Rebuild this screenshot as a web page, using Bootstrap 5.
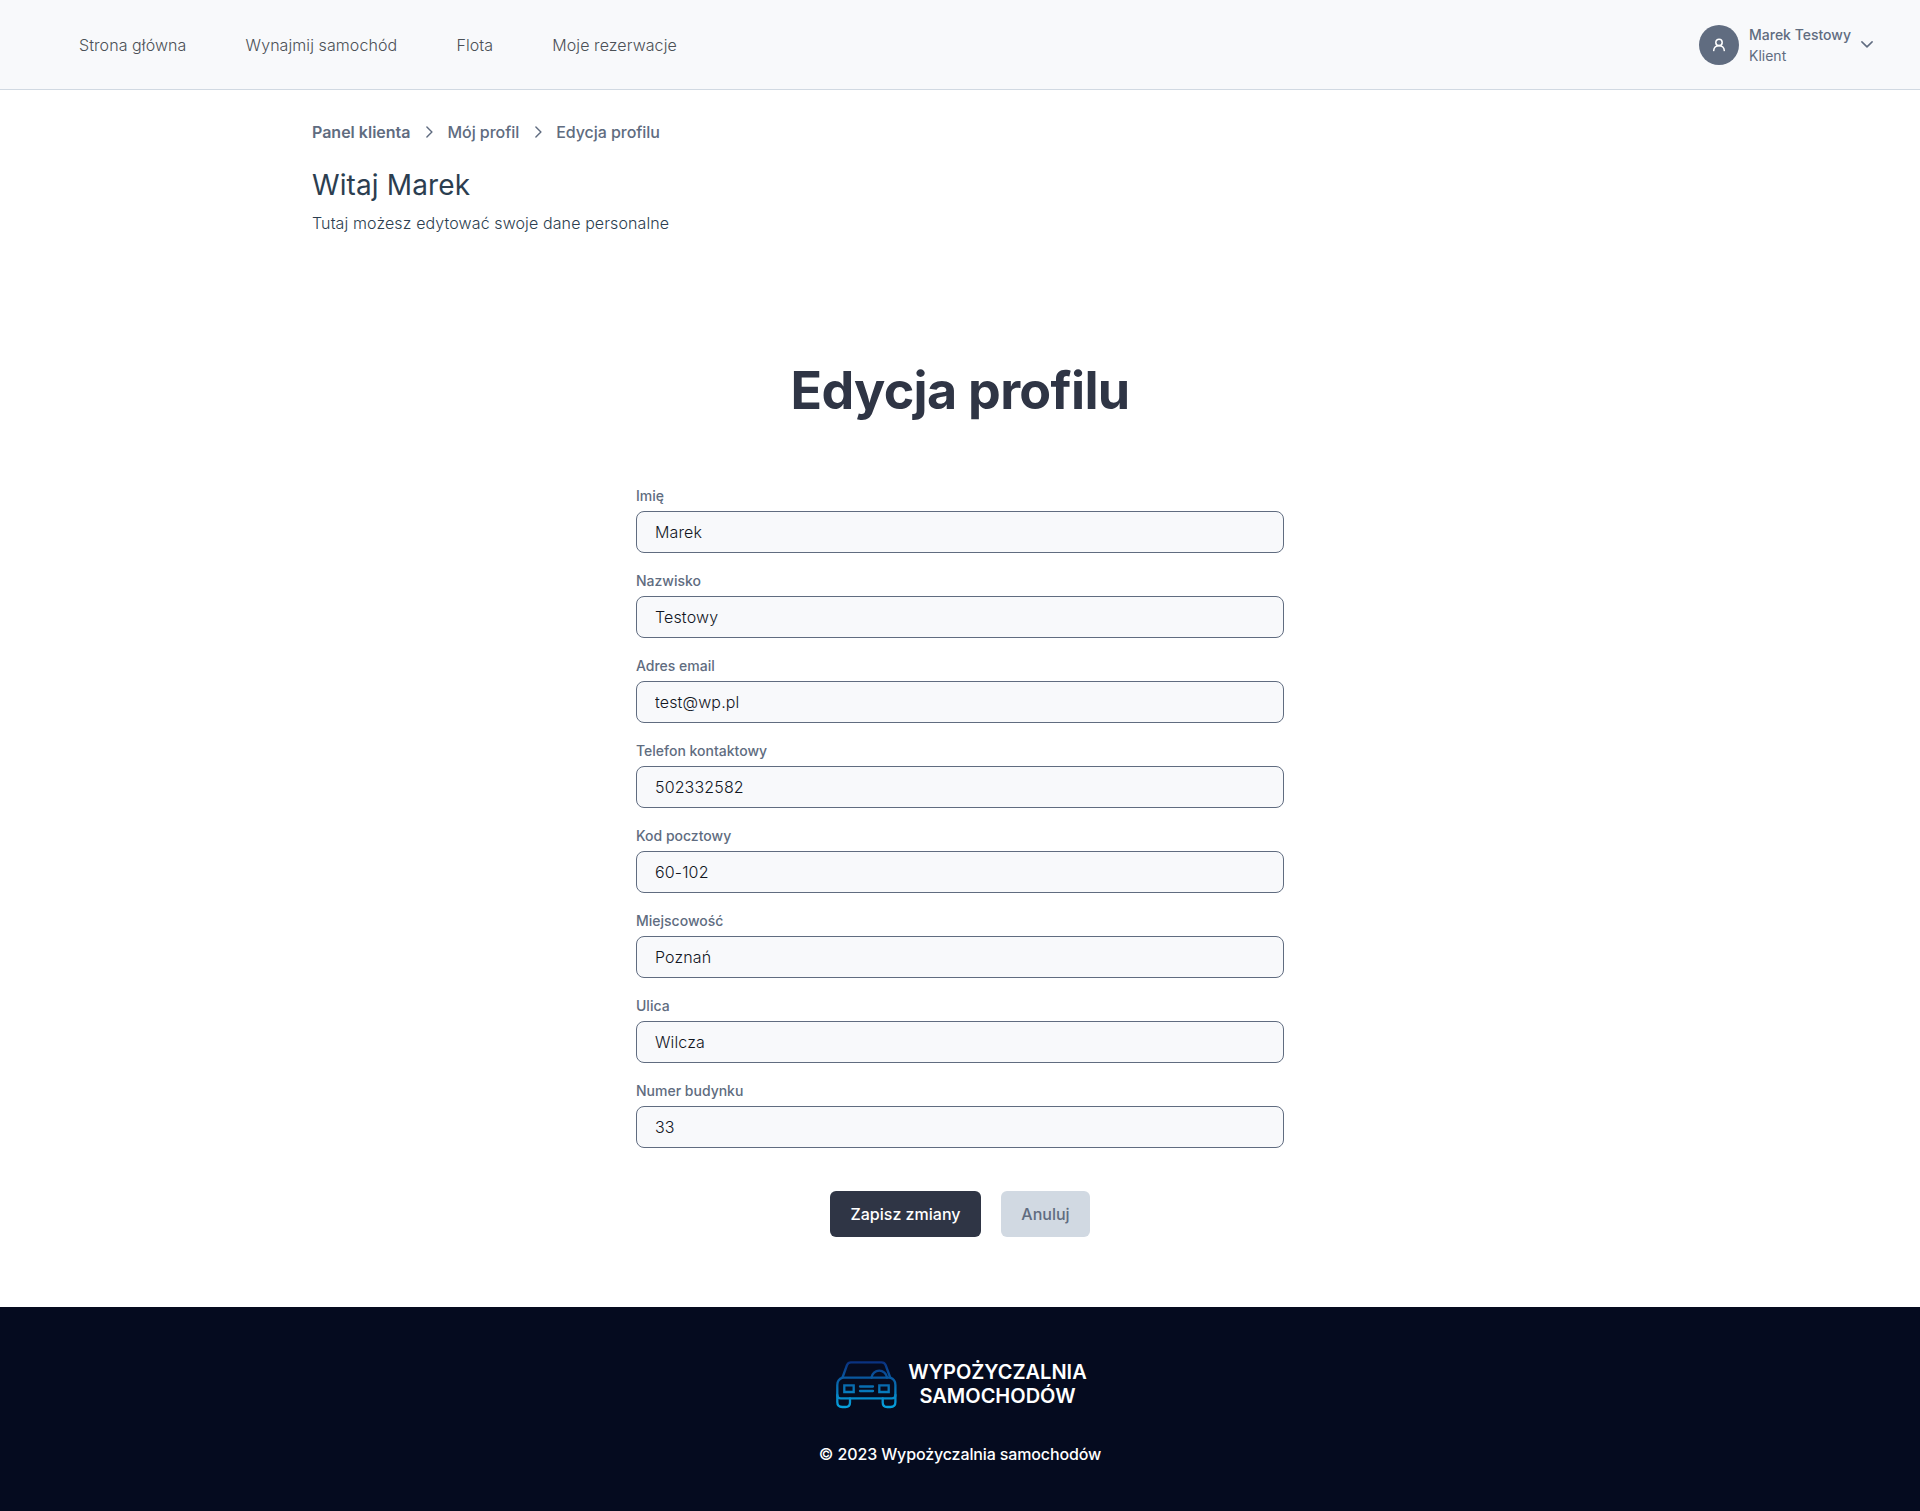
<!DOCTYPE html>
<html lang="pl">
<head>
<meta charset="utf-8">
<meta name="viewport" content="width=device-width, initial-scale=1">
<title>Edycja profilu</title>
<link href="https://cdn.jsdelivr.net/npm/bootstrap@5.3.0/dist/css/bootstrap.min.css" rel="stylesheet">
<style>
  body { font-family: Inter, "Liberation Sans", sans-serif; font-size: 16px; line-height: 1.5; color: #2c3e50; background: #fff; }
  .topbar { height: 90px; background: #f8f9fb; border-bottom: 1px solid #d1d9e2; padding: 0 47px 0 79px; }
  .topbar .navbar-nav { gap: 59.2px; }
  .topbar .nav-link { padding: 0; color: #4b5056; font-weight: 300; letter-spacing: .08px; }
  .user-box { color: #606c80; font-size: 14px; line-height: 21px; gap: 10px; }
  .avatar { width: 40px; height: 40px; background: #606c80; }
  .intro { padding: 30px 312px 0; }
  .crumbs { color: #606c80; font-weight: 500; height: 24px; }
  .crumbs a { color: inherit; text-decoration: none; letter-spacing: -.05px; }
  .crumbs a.fw-semibold { letter-spacing: 0; }
  .crumb-sep { margin: 0 14px 0 16px; }
  .welcome { font-size: 28px; line-height: 34px; font-weight: 400; letter-spacing: .12px; margin: 24px 0 0; }
  .welcome-note { font-weight: 300; letter-spacing: .11px; margin: 9px 0 0; }
  .form-title { font-size: 52px; line-height: 62px; font-weight: 700; letter-spacing: -.7px; color: #2f3545; margin: 125px 0 0; }
  .profile-form { width: 648px; margin: 63px auto 0; }
  .field { height: 85px; }
  .field .form-label { display: block; font-size: 14px; font-weight: 500; line-height: 21px; color: #606c80; margin: 0 0 5px; }
  .field .form-control { height: 42px; padding: 0 18px; border: 1px solid #606c80; border-radius: 8px; background: #f8f9fb; color: #12161f; font-weight: 300; letter-spacing: .14px; }
  .actions { gap: 20px; padding-top: 26px; }
  .actions .btn { height: 46px; padding: 0; border: 0; border-radius: 6px; font-weight: 500; }
  .btn-save { width: 151px; }
  .btn-cancel { width: 89px; }
  .btn-save, .btn-save:hover { background: #2f3545; color: #fff; }
  .btn-cancel, .btn-cancel:hover { background: #d1d9e2; color: #606c80; }
  .site-footer { margin-top: 70px; height: 204px; background: #050b1f; color: #fff; padding-top: 53px; }
  .brand-row { gap: 11px; padding-left: 2px; height: 48px; }
  .brand-name { font-size: 20px; line-height: 24px; font-weight: 600; }
  .copyright { font-weight: 500; letter-spacing: -.13px; margin-top: 34px; }
</style>
<script src="https://cdn.jsdelivr.net/npm/bootstrap@5.3.0/dist/js/bootstrap.bundle.min.js"></script>
</head>
<body>
<header class="topbar d-flex align-items-center justify-content-between">
  <nav class="navbar-nav flex-row">
    <a class="nav-link" href="#">Strona główna</a>
    <a class="nav-link" href="#">Wynajmij samochód</a>
    <a class="nav-link" href="#">Flota</a>
    <a class="nav-link" href="#">Moje rezerwacje</a>
  </nav>
  <div class="user-box d-flex align-items-center">
    <div class="avatar rounded-circle d-flex align-items-center justify-content-center">
      <svg width="14" height="14" viewBox="0 0 14 14" fill="none" stroke="#fff" stroke-width="1.500" stroke-linecap="round"><circle cx="7" cy="4.400" r="3.200"/><path d="M1.700 12.600C1.900 9.500 4 7.700 7 7.700s5.100 1.800 5.300 4.900"/></svg>
    </div>
    <div class="user-text"><div class="fw-medium">Marek Testowy</div><div>Klient</div></div>
    <svg width="12" height="7" viewBox="0 0 12 7" fill="none" stroke="#606c80" stroke-width="1.500" stroke-linecap="round" stroke-linejoin="round"><path d="M.9.9 6 5.900 11.100.9"/></svg>
  </div>
</header>

<main>
  <section class="intro">
    <nav class="crumbs d-flex align-items-center">
      <a class="fw-semibold" href="#">Panel klienta</a>
      <svg class="crumb-sep" width="7" height="12" viewBox="0 0 7 12" fill="none" stroke="#606c80" stroke-width="1.400" stroke-linecap="round" stroke-linejoin="round"><path d="M.9.9 5.900 6 .9 11.100"/></svg>
      <a href="#">Mój profil</a>
      <svg class="crumb-sep" width="7" height="12" viewBox="0 0 7 12" fill="none" stroke="#606c80" stroke-width="1.400" stroke-linecap="round" stroke-linejoin="round"><path d="M.9.9 5.900 6 .9 11.100"/></svg>
      <a href="#">Edycja profilu</a>
    </nav>
    <h2 class="welcome">Witaj Marek</h2>
    <p class="welcome-note">Tutaj możesz edytować swoje dane personalne</p>
  </section>
  <h1 class="form-title text-center">Edycja profilu</h1>
  <form class="profile-form">
    <div class="field"><label class="form-label" for="f1">Imię</label><input class="form-control" id="f1" value="Marek"></div>
    <div class="field"><label class="form-label" for="f2">Nazwisko</label><input class="form-control" id="f2" value="Testowy"></div>
    <div class="field"><label class="form-label" for="f3">Adres email</label><input class="form-control" id="f3" value="test@wp.pl"></div>
    <div class="field"><label class="form-label" for="f4">Telefon kontaktowy</label><input class="form-control" id="f4" value="502332582"></div>
    <div class="field"><label class="form-label" for="f5">Kod pocztowy</label><input class="form-control" id="f5" value="60-102"></div>
    <div class="field"><label class="form-label" for="f6">Miejscowość</label><input class="form-control" id="f6" value="Poznań"></div>
    <div class="field"><label class="form-label" for="f7">Ulica</label><input class="form-control" id="f7" value="Wilcza"></div>
    <div class="field"><label class="form-label" for="f8">Numer budynku</label><input class="form-control" id="f8" value="33"></div>
    <div class="actions d-flex justify-content-center">
      <button class="btn btn-save" type="button">Zapisz zmiany</button>
      <button class="btn btn-cancel" type="button">Anuluj</button>
    </div>
  </form>
</main>

<footer class="site-footer text-center">
  <div class="brand-row d-flex justify-content-center align-items-start">
    <svg width="62" height="49" viewBox="0 0 62 49" fill="none" stroke="url(#carGrad)" stroke-width="2.300" stroke-linejoin="round" stroke-linecap="round">
      <defs><linearGradient id="carGrad" gradientUnits="userSpaceOnUse" x1="0" y1="1" x2="0" y2="47"><stop offset="0" stop-color="#0a2f7d"/><stop offset="1" stop-color="#06a0dc"/></linearGradient></defs>
      <path d="M7.500 17.500 12 5Q13.100 2.300 16 2.300H46.600Q49.500 2.300 50.600 5L55.200 17.500"/>
      <path d="M36.500 17.500A7.800 7.800 0 0 1 52 17.500"/>
      <path d="M7.500 17.700H55.200Q60.400 19.500 60.400 25V35Q60.400 38.400 57 38.400H5.700Q2.300 38.400 2.300 35V25Q2.300 19.500 7.500 17.700Z"/>
      <path d="M2.300 35V42Q2.300 47 7.300 47H10.500Q15 47 15 42.500V38.400M60.400 35V42Q60.400 47 55.400 47H52.200Q47.700 47 47.700 42.500V38.400"/>
      <path stroke-linejoin="miter" d="M9.300 25.400H18.700V32H9.300ZM44.300 25.400H53.700V32H44.300Z"/>
      <path d="M25 26.500H38M25 31H38"/>
    </svg>
    <div class="brand-name">WYPOŻYCZALNIA<br>SAMOCHODÓW</div>
  </div>
  <div class="copyright">© 2023 Wypożyczalnia samochodów</div>
</footer>
</body>
</html>
